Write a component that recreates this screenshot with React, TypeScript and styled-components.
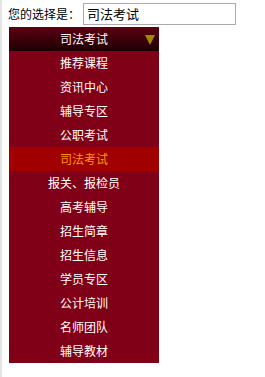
import React from "react";
import styled, { createGlobalStyle } from "styled-components";

const Global = createGlobalStyle`
  html, body { margin: 0; padding: 0; background: #fff; }
  body {
    border-left: 2px solid #e4e4e4;
    min-height: 377px;
    box-sizing: border-box;
    font-family: "Noto Sans CJK SC", "Noto Sans", sans-serif;
  }
`;

const Page = styled.div`
  padding: 3px 0 0 6px;
`;

const Row = styled.div`
  display: flex;
  align-items: center;
  height: 22px;
`;

const Label = styled.span`
  flex: 0 0 75px;
  white-space: nowrap;
  font-size: 12px;
  color: #000;
  line-height: 22px;
`;

const Field = styled.div`
  box-sizing: border-box;
  flex: 0 0 153px;
  height: 22px;
  border: 1px solid #aaa;
  font-size: 13px;
  line-height: 20px;
  padding-left: 3px;
  color: #000;
`;

const Panel = styled.div`
  margin: 2px 0 0 1px;
  width: 150px;
  background: #800018;
`;

const Header = styled.div`
  position: relative;
  height: 24px;
  line-height: 24px;
  text-align: center;
  color: #fff;
  font-size: 12px;
  background: linear-gradient(#5e0012, #1c0002);
`;

const Arrow = styled.svg`
  position: absolute;
  right: 4px;
  top: 8px;
`;

const Item = styled.div<{ $active?: boolean }>`
  height: 24px;
  line-height: 24px;
  text-align: center;
  font-size: 12px;
  color: ${(p) => (p.$active ? "#ff9a00" : "#fff")};
  background: ${(p) => (p.$active ? "#a00000" : "transparent")};
`;

const items = [
  "推荐课程",
  "资讯中心",
  "辅导专区",
  "公职考试",
  "司法考试",
  "报关、报检员",
  "高考辅导",
  "招生简章",
  "招生信息",
  "学员专区",
  "公计培训",
  "名师团队",
  "辅导教材",
];

export default function App() {
  return (
    <>
      <Global />
      <Page>
        <Row>
          <Label>您的选择是：</Label>
          <Field>司法考试</Field>
        </Row>
        <Panel>
          <Header>
            司法考试
            <Arrow width="10" height="10" viewBox="0 0 10 10">
              <polygon points="0,0 10,0 5,10" fill="#a08800" />
            </Arrow>
          </Header>
          {items.map((t, i) => (
            <Item key={i} $active={i === 4}>
              {t}
            </Item>
          ))}
        </Panel>
      </Page>
    </>
  );
}
